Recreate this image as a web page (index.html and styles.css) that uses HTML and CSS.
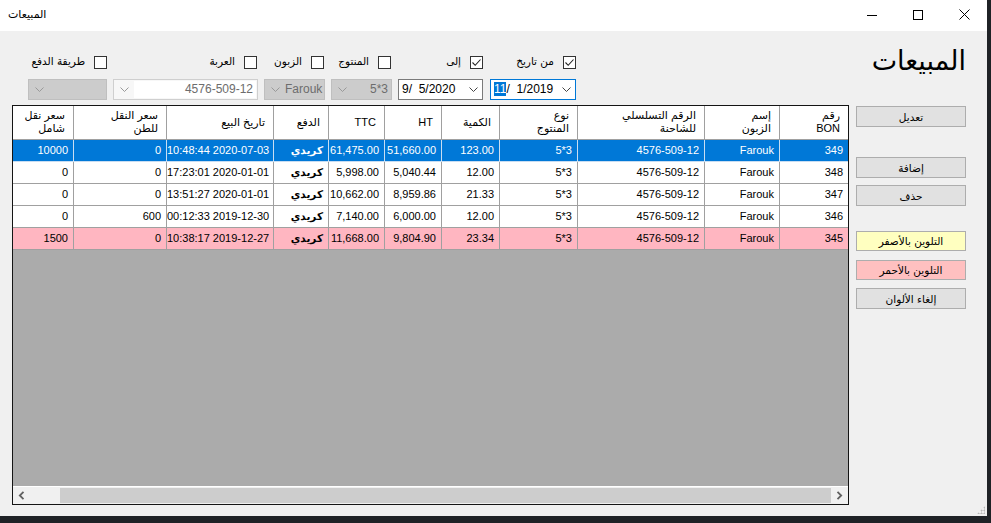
FILE: index.html
```html
<!DOCTYPE html>
<html lang="ar">
<head>
<meta charset="utf-8">
<title>المبيعات</title>
<link rel="stylesheet" href="styles.css">
</head>
<body>
<div class="window">
  <div class="titlebar">
    <div class="wtitle">المبيعات</div>
    <div class="caption">
      <div class="cbtn"><svg width="10" height="10" viewBox="0 0 10 10"><line x1="0" y1="5.5" x2="10" y2="5.5" stroke="#000" stroke-width="1"/></svg></div>
      <div class="cbtn"><svg width="10" height="10" viewBox="0 0 10 10"><rect x="0.5" y="0.5" width="9" height="9" fill="none" stroke="#000" stroke-width="1"/></svg></div>
      <div class="cbtn"><svg width="11" height="11" viewBox="0 0 11 11"><path d="M0.5 0.5 L10.5 10.5 M10.5 0.5 L0.5 10.5" stroke="#000" stroke-width="1"/></svg></div>
    </div>
  </div>
  <div class="client">
    <div class="leftcol">
      <div class="filters">
        <div class="checkrow">
          <label class="chk w1"><span class="lbl">طريقة الدفع</span><span class="box"></span></label>
          <label class="chk w2"><span class="lbl">العربة</span><span class="box"></span></label>
          <label class="chk w3"><span class="lbl">الزبون</span><span class="box"></span></label>
          <label class="chk w4"><span class="lbl">المنتوج</span><span class="box"></span></label>
          <label class="chk w5"><span class="lbl">إلى</span><span class="box checked"><svg width="11" height="11" viewBox="0 0 11 11"><path d="M1.5 5.5 L4.2 8.3 L9.5 2.5" fill="none" stroke="#222" stroke-width="1.1"/></svg></span></label>
          <label class="chk w6"><span class="lbl">من تاريخ</span><span class="box checked"><svg width="11" height="11" viewBox="0 0 11 11"><path d="M1.5 5.5 L4.2 8.3 L9.5 2.5" fill="none" stroke="#222" stroke-width="1.1"/></svg></span></label>
        </div>
        <div class="comborow">
          <div class="combo dis c1"><span class="arrow"><svg width="9" height="5" viewBox="0 0 9 5"><path d="M0.5 0.5 L4.5 4.5 L8.5 0.5" fill="none" stroke="#999" stroke-width="1"/></svg></span><span class="ctext"></span></div>
          <div class="combo edit c2"><span class="arrow"><svg width="9" height="5" viewBox="0 0 9 5"><path d="M0.5 0.5 L4.5 4.5 L8.5 0.5" fill="none" stroke="#999" stroke-width="1"/></svg></span><span class="ctext">4576-509-12</span></div>
          <div class="combo dis c3"><span class="arrow"><svg width="9" height="5" viewBox="0 0 9 5"><path d="M0.5 0.5 L4.5 4.5 L8.5 0.5" fill="none" stroke="#999" stroke-width="1"/></svg></span><span class="ctext">Farouk</span></div>
          <div class="combo dis c4"><span class="arrow"><svg width="9" height="5" viewBox="0 0 9 5"><path d="M0.5 0.5 L4.5 4.5 L8.5 0.5" fill="none" stroke="#999" stroke-width="1"/></svg></span><span class="ctext">5*3</span></div>
          <div class="date d1"><span class="dtext">9/&nbsp;&nbsp;5/2020</span><span class="darrow"><svg width="9" height="5" viewBox="0 0 9 5"><path d="M0.5 0.5 L4.5 4.5 L8.5 0.5" fill="none" stroke="#444" stroke-width="1"/></svg></span></div>
          <div class="date d2 focus"><span class="dtext"><span class="hl">11</span>/&nbsp;&nbsp;1/2019</span><span class="darrow"><svg width="9" height="5" viewBox="0 0 9 5"><path d="M0.5 0.5 L4.5 4.5 L8.5 0.5" fill="none" stroke="#444" stroke-width="1"/></svg></span></div>
        </div>
      </div>
      <div class="grid">
        <div class="gbody">
          <div class="row head">
            <div class="cell">رقم<br>BON</div>
            <div class="cell">إسم<br>الزبون</div>
            <div class="cell">الرقم التسلسلي<br>للشاحنة</div>
            <div class="cell">نوع<br>المنتوج</div>
            <div class="cell">الكمية</div>
            <div class="cell">HT</div>
            <div class="cell">TTC</div>
            <div class="cell">الدفع</div>
            <div class="cell">تاريخ البيع</div>
            <div class="cell">سعر النقل<br>للطن</div>
            <div class="cell">سعر نقل<br>شامل</div>
          </div>
          <div class="row sel">
            <div class="cell">349</div><div class="cell">Farouk</div><div class="cell">4576-509-12</div><div class="cell">5*3</div><div class="cell">123.00</div><div class="cell">51,660.00</div><div class="cell">61,475.00</div><div class="cell ar">كريدي</div><div class="cell">10:48:44 2020-07-03</div><div class="cell">0</div><div class="cell">10000</div>
          </div>
          <div class="row">
            <div class="cell">348</div><div class="cell">Farouk</div><div class="cell">4576-509-12</div><div class="cell">5*3</div><div class="cell">12.00</div><div class="cell">5,040.44</div><div class="cell">5,998.00</div><div class="cell ar">كريدي</div><div class="cell">17:23:01 2020-01-01</div><div class="cell">0</div><div class="cell">0</div>
          </div>
          <div class="row">
            <div class="cell">347</div><div class="cell">Farouk</div><div class="cell">4576-509-12</div><div class="cell">5*3</div><div class="cell">21.33</div><div class="cell">8,959.86</div><div class="cell">10,662.00</div><div class="cell ar">كريدي</div><div class="cell">13:51:27 2020-01-01</div><div class="cell">0</div><div class="cell">0</div>
          </div>
          <div class="row">
            <div class="cell">346</div><div class="cell">Farouk</div><div class="cell">4576-509-12</div><div class="cell">5*3</div><div class="cell">12.00</div><div class="cell">6,000.00</div><div class="cell">7,140.00</div><div class="cell ar">كريدي</div><div class="cell">00:12:33 2019-12-30</div><div class="cell">600</div><div class="cell">0</div>
          </div>
          <div class="row pink">
            <div class="cell">345</div><div class="cell">Farouk</div><div class="cell">4576-509-12</div><div class="cell">5*3</div><div class="cell">23.34</div><div class="cell">9,804.90</div><div class="cell">11,668.00</div><div class="cell ar">كريدي</div><div class="cell">10:38:17 2019-12-27</div><div class="cell">0</div><div class="cell">1500</div>
          </div>
        </div>
        <div class="hscroll">
          <div class="sarrow"><svg width="7" height="9" viewBox="0 0 7 9"><path d="M5.5 0.8 L1.8 4.5 L5.5 8.2" fill="none" stroke="#606060" stroke-width="1.8"/></svg></div>
          <div class="strack"></div>
          <div class="sthumb"></div>
          <div class="sarrow"><svg width="7" height="9" viewBox="0 0 7 9"><path d="M1.5 0.8 L5.2 4.5 L1.5 8.2" fill="none" stroke="#606060" stroke-width="1.8"/></svg></div>
        </div>
      </div>
    </div>
    <div class="rightcol">
      <div class="bigtitle">المبيعات</div>
      <button class="btn b1">تعديل</button>
      <button class="btn b2">إضافة</button>
      <button class="btn b3">حذف</button>
      <button class="btn yellow b4">التلوين بالأصفر</button>
      <button class="btn red b5">التلوين بالأحمر</button>
      <button class="btn b6">إلغاء الألوان</button>
    </div>
  </div>
  <div class="grip"></div>
</div>
</body>
</html>
```

FILE: styles.css
```css
html, body {
  margin: 0;
  padding: 0;
}
body {
  width: 991px;
  height: 523px;
  background: #1f2226;
  font-family: "Liberation Sans", "DejaVu Sans", sans-serif;
  font-size: 11px;
  color: #000;
  overflow: hidden;
}
.window {
  width: 987px;
  height: 516px;
  background: #f0f0f0;
  display: flex;
  flex-direction: column;
  position: relative;
}
.titlebar {
  height: 31px;
  background: #fff;
  display: flex;
  align-items: center;
  justify-content: space-between;
  flex: none;
}
.wtitle {
  padding-left: 8px;
  font-family: "DejaVu Sans", sans-serif;
  font-size: 11px;
  padding-bottom: 3px;
}
.caption {
  display: flex;
  height: 31px;
}
.cbtn {
  width: 46px;
  height: 31px;
  display: flex;
  align-items: center;
  justify-content: center;
  padding-bottom: 2px;
  box-sizing: border-box;
}
.client {
  flex: 1;
  display: flex;
  padding-left: 12px;
}
.leftcol {
  width: 837px;
  display: flex;
  flex-direction: column;
}
.filters {
  height: 74px;
  box-sizing: border-box;
  padding-top: 25px;
}
.checkrow {
  display: flex;
  height: 13px;
}
.chk {
  display: flex;
  justify-content: flex-end;
  align-items: center;
  gap: 9px;
  font-family: "DejaVu Sans", sans-serif;
  font-size: 10.5px;
}
.w1 { width: 95px; }
.w2 { width: 150px; }
.w3 { width: 67px; }
.w4 { width: 67px; }
.w5 { width: 92px; }
.w6 { width: 93px; }
.lbl {
  white-space: nowrap;
  line-height: 13px;
  padding-bottom: 2px;
}
.box {
  width: 13px;
  height: 13px;
  box-sizing: border-box;
  border: 1px solid #333;
  background: #fff;
  display: flex;
  align-items: center;
  justify-content: center;
  flex: none;
}
.comborow {
  display: flex;
  margin-top: 10px;
  height: 21px;
  gap: 6px;
  padding-left: 16px;
}
.combo {
  height: 21px;
  box-sizing: border-box;
  border: 1px solid #c6c6c6;
  display: flex;
  align-items: center;
  font-size: 12px;
  color: #6d6d6d;
}
.combo.dis {
  background: #cccccc;
  border-color: #bfbfbf;
}
.combo.edit {
  background: #f7f7f7;
  border-color: #cfcfcf;
}
.combo .arrow {
  width: 20px;
  display: flex;
  justify-content: center;
  align-items: center;
  flex: none;
}
.combo .ctext {
  flex: 1;
  text-align: right;
  padding-right: 3px;
  height: 17px;
  line-height: 17px;
}
.combo.edit .ctext {
  background: #fff;
  margin-right: 1px;
}
.c1 { width: 79px; }
.c2 { width: 145px; }
.c3 { width: 61px; }
.c4 { width: 61px; }
.date {
  height: 21px;
  box-sizing: border-box;
  border: 1px solid #7a7a7a;
  background: #fff;
  display: flex;
  align-items: center;
  justify-content: space-between;
  font-size: 12px;
  padding-left: 3px;
}
.date.focus {
  border-color: #0078d7;
}
.d1 { width: 85px; }
.d2 { width: 86px; margin-left: 1px; }
.dtext {
  line-height: 15px;
}
.hl {
  background: #0078d7;
  color: #fff;
}
.darrow {
  width: 18px;
  display: flex;
  justify-content: center;
}
.grid {
  height: 400px;
  box-sizing: border-box;
  border: 1px solid #141414;
  background: #ababab;
  display: flex;
  flex-direction: column;
}
.gbody {
  flex: 1;
  direction: rtl;
}
.row {
  display: grid;
  grid-template-columns: 69px 75px 127px 78px 58px 57px 56px 55px 107px 93px 60px;
  height: 22px;
  background: #fff;
}
.cell {
  box-sizing: border-box;
  border-left: 1px solid #a0a0a0;
  border-bottom: 1px solid #a0a0a0;
  text-align: right;
  padding-right: 5px;
  line-height: 21px;
  white-space: nowrap;
  overflow: hidden;
  direction: ltr;
}
.cell:last-child {
  border-left: none;
}
.cell.ar {
  direction: rtl;
  font-family: "DejaVu Sans", sans-serif;
  font-weight: bold;
  font-size: 10.5px;
}
.row.head {
  height: 34px;
}
.row.head .cell {
  direction: rtl;
  font-family: "Liberation Sans", "DejaVu Sans", sans-serif;
  font-size: 11px;
  line-height: 13px;
  padding-right: 8px;
  display: flex;
  align-items: center;
  justify-content: flex-start;
  text-align: right;
  padding-bottom: 1px;
}
.row.sel {
  background: #0078d7;
  color: #fff;
}
.row.sel .cell {
  border-color: #c8ddf2;
}
.row.pink {
  background: #ffb6c1;
}
.hscroll {
  height: 17px;
  border-top: 1px solid #fff;
  background: #f0f0f0;
  display: flex;
  flex: none;
}
.sarrow {
  width: 17px;
  display: flex;
  align-items: center;
  justify-content: center;
}
.strack {
  width: 30px;
}
.sthumb {
  flex: 1;
  background: #cdcdcd;
  margin: 1px 0;
}
.rightcol {
  width: 110px;
  margin-left: 7px;
  display: flex;
  flex-direction: column;
  direction: rtl;
}
.bigtitle {
  height: 74px;
  box-sizing: border-box;
  padding-top: 10px;
  font-family: "DejaVu Sans", sans-serif;
  font-size: 27px;
  line-height: 40px;
  text-align: right;
  white-space: nowrap;
}
.btn {
  height: 21px;
  box-sizing: border-box;
  border: 1px solid #adadad;
  background: #e1e1e1;
  font-family: "DejaVu Sans", sans-serif;
  font-size: 10.5px;
  color: #000;
  padding: 0;
  line-height: 18px;
  width: 110px;
}
.b1 { margin-top: 1px; }
.b2 { margin-top: 30px; }
.b3 { margin-top: 7px; }
.b4 { margin-top: 25px; height: 20px; }
.b5 { margin-top: 9px; height: 20px; }
.b6 { margin-top: 8px; }
.yellow {
  background: #ffffc0;
}
.red {
  background: #ffc0c0;
}
.grip {
  position: absolute;
  right: 2px;
  bottom: 2px;
  width: 8px;
  height: 8px;
  background:
    radial-gradient(circle, #b8b8b8 45%, transparent 50%) 0 0 / 3px 3px;
  clip-path: polygon(100% 0, 100% 100%, 0 100%);
}
```
